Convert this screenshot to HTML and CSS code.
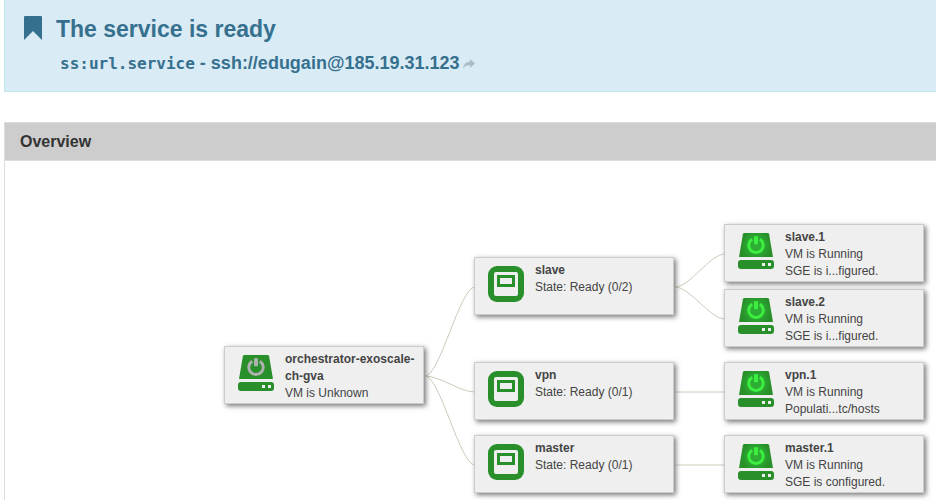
FILE: index.html
```html
<!DOCTYPE html>
<html lang="en">
<head>
<meta charset="utf-8">
<title>The service is ready</title>
<link rel="stylesheet" href="styles.css">
</head>
<body>
<svg class="defs" aria-hidden="true">
  <defs>
    <radialGradient id="glow" gradientUnits="userSpaceOnUse" cx="18" cy="12.300" r="15">
      <stop offset="0" stop-color="#2fb035"/>
      <stop offset="0.55" stop-color="#2ca832"/>
      <stop offset="1" stop-color="#288f2a"/>
    </radialGradient>
    <symbol id="vm" viewBox="0 0 36 36">
      <path class="drive" d="M6.500 0h23q1.300 0 1.600 1.200L35 24H1L4.900 1.200Q5.200 0 6.500 0z"/>
      <path class="base" fill-rule="evenodd" d="M3 27h30q3 0 3 3v3q0 3-3 3H3q-3 0-3-3v-3q0-3 3-3zM24 30v3h3v-3zM30 30v3h3v-3z"/>
      <path class="power" d="M14.200 6.200a7.200 7.200 0 1 0 7.600 0"/>
      <path class="power power-bar" d="M18 3.200v8"/>
    </symbol>
    <symbol id="group" viewBox="0 0 36 36">
      <rect class="base" width="36" height="36" rx="9"/>
      <rect class="paper" x="6" y="6" width="24" height="24" rx="2"/>
      <path class="base" fill-rule="evenodd" d="M9 9h18v12H9zM12 12v6h12v-6z"/>
    </symbol>
  </defs>
</svg>

<header class="alert">
  <svg class="bookmark" viewBox="0 0 18 24" aria-hidden="true"><path d="M1 0h16q1 0 1 1v23l-9-9-9 9V1q0-1 1-1z"/></svg>
  <div>
    <h1 class="alert-title">The service is ready</h1>
    <p class="alert-url"><code>ss:url.service</code> - <a href="ssh://edugain@185.19.31.123">ssh://edugain@185.19.31.123<svg class="share" viewBox="0 0 12 10" aria-hidden="true"><path d="M7 0l5 4.500L7 9V6.400C4 6.200 2 7 0 9.500 0.600 5.500 3 2.900 7 2.600z"/></svg></a></p>
  </div>
</header>

<section class="panel">
  <h2 class="panel-title">Overview</h2>
  <div class="canvas">
    <svg class="links" width="931" height="339" aria-hidden="true">
      <path d="M420 215C435 215 455 126 470 126M420 215C435 215 455 231 470 231M420 215C435 215 455 304 470 304M670 126C685 126 705 93 720 93M670 126C685 126 705 158 720 158M670 231H720M670 304H720"/>
    </svg>
    <article class="node root off"><svg class="icon" aria-hidden="true"><use href="#vm"/></svg><div><h3>orchestrator-exoscale-ch-gva</h3><p>VM is Unknown</p></div></article>
    <article class="node slave"><svg class="icon" aria-hidden="true"><use href="#group"/></svg><div><h3>slave</h3><p>State: Ready (0/2)</p></div></article>
    <article class="node vpn"><svg class="icon" aria-hidden="true"><use href="#group"/></svg><div><h3>vpn</h3><p>State: Ready (0/1)</p></div></article>
    <article class="node master"><svg class="icon" aria-hidden="true"><use href="#group"/></svg><div><h3>master</h3><p>State: Ready (0/1)</p></div></article>
    <article class="node slave-1"><svg class="icon" aria-hidden="true"><use href="#vm"/></svg><div><h3>slave.1</h3><p>VM is Running</p><p>SGE is i...figured.</p></div></article>
    <article class="node slave-2"><svg class="icon" aria-hidden="true"><use href="#vm"/></svg><div><h3>slave.2</h3><p>VM is Running</p><p>SGE is i...figured.</p></div></article>
    <article class="node vpn-1"><svg class="icon" aria-hidden="true"><use href="#vm"/></svg><div><h3>vpn.1</h3><p>VM is Running</p><p>Populati...tc/hosts</p></div></article>
    <article class="node master-1"><svg class="icon" aria-hidden="true"><use href="#vm"/></svg><div><h3>master.1</h3><p>VM is Running</p><p>SGE is configured.</p></div></article>
  </div>
</section>
</body>
</html>
```
FILE: styles.css
```css
* { box-sizing: border-box; }

body {
  margin: 0;
  padding-left: 4px;
  min-height: 100vh;
  display: flex;
  flex-direction: column;
  gap: 30px;
  background: #fff;
  color: #333;
  font-family: "Liberation Sans", Arial, sans-serif;
}

h1, h2, h3, p { margin: 0; }

.defs { position: absolute; width: 0; height: 0; }

.alert {
  display: flex;
  gap: 14px;
  padding: 12px 20px 15px 19px;
  background: #d9ebf5;
  border-left: 1px solid #bce8f1;
  border-bottom: 1px solid #bce8f1;
  color: #36708f;
}

.bookmark { width: 18px; height: 24px; margin-top: 4px; fill: currentColor; }

.alert-title { font-size: 23px; line-height: 34px; font-weight: bold; }

.alert-url {
  margin-top: 5px;
  padding-left: 4px;
  font-size: 18px;
  line-height: 24px;
  font-weight: bold;
}

.alert-url code { font-family: "DejaVu Sans Mono", monospace; font-size: 16px; }
.alert-url a { color: inherit; text-decoration: none; }
.share { width: 12px; height: 10px; margin-left: 3px; fill: #a9bec9; }

.panel {
  flex: 1;
  display: flex;
  flex-direction: column;
  border-top: 1px solid #ddd;
  border-left: 1px solid #ddd;
}

.panel-title {
  padding: 7px 15px;
  background: #cdcdcd;
  border-bottom: 1px solid #ddd;
  font-size: 16px;
  line-height: 23px;
  font-weight: bold;
}

.canvas { flex: 1; position: relative; }
.links { display: block; fill: none; stroke: #ccccbb; }

.node {
  position: absolute;
  display: flex;
  gap: 11px;
  width: 200px;
  height: 58px;
  padding: 4px 0 0 13px;
  background: #efefef;
  border: 1px solid #ccc;
  box-shadow: 2px 2px 5px #777;
  color: #444;
  font-size: 12px;
  line-height: 17px;
}

.node h3 { font-size: 12px; line-height: 17px; }
.icon { flex: none; width: 36px; height: 36px; margin-top: 4px; }

.drive { fill: var(--drive, url(#glow)); }
.base { fill: #288f2a; }
.paper { fill: #efefef; }
.power { fill: none; stroke: var(--power, #3bee40); stroke-width: 3px; }
.power-bar { stroke-width: 4px; }
.off { --power: #b0b0b0; --drive: #288f2a; }

.root { left: 219px; top: 185px; }
.slave { left: 469px; top: 96px; }
.vpn { left: 469px; top: 201px; }
.master { left: 469px; top: 274px; }
.slave-1 { left: 719px; top: 63px; }
.slave-2 { left: 719px; top: 128px; }
.vpn-1 { left: 719px; top: 201px; }
.master-1 { left: 719px; top: 274px; }
```
